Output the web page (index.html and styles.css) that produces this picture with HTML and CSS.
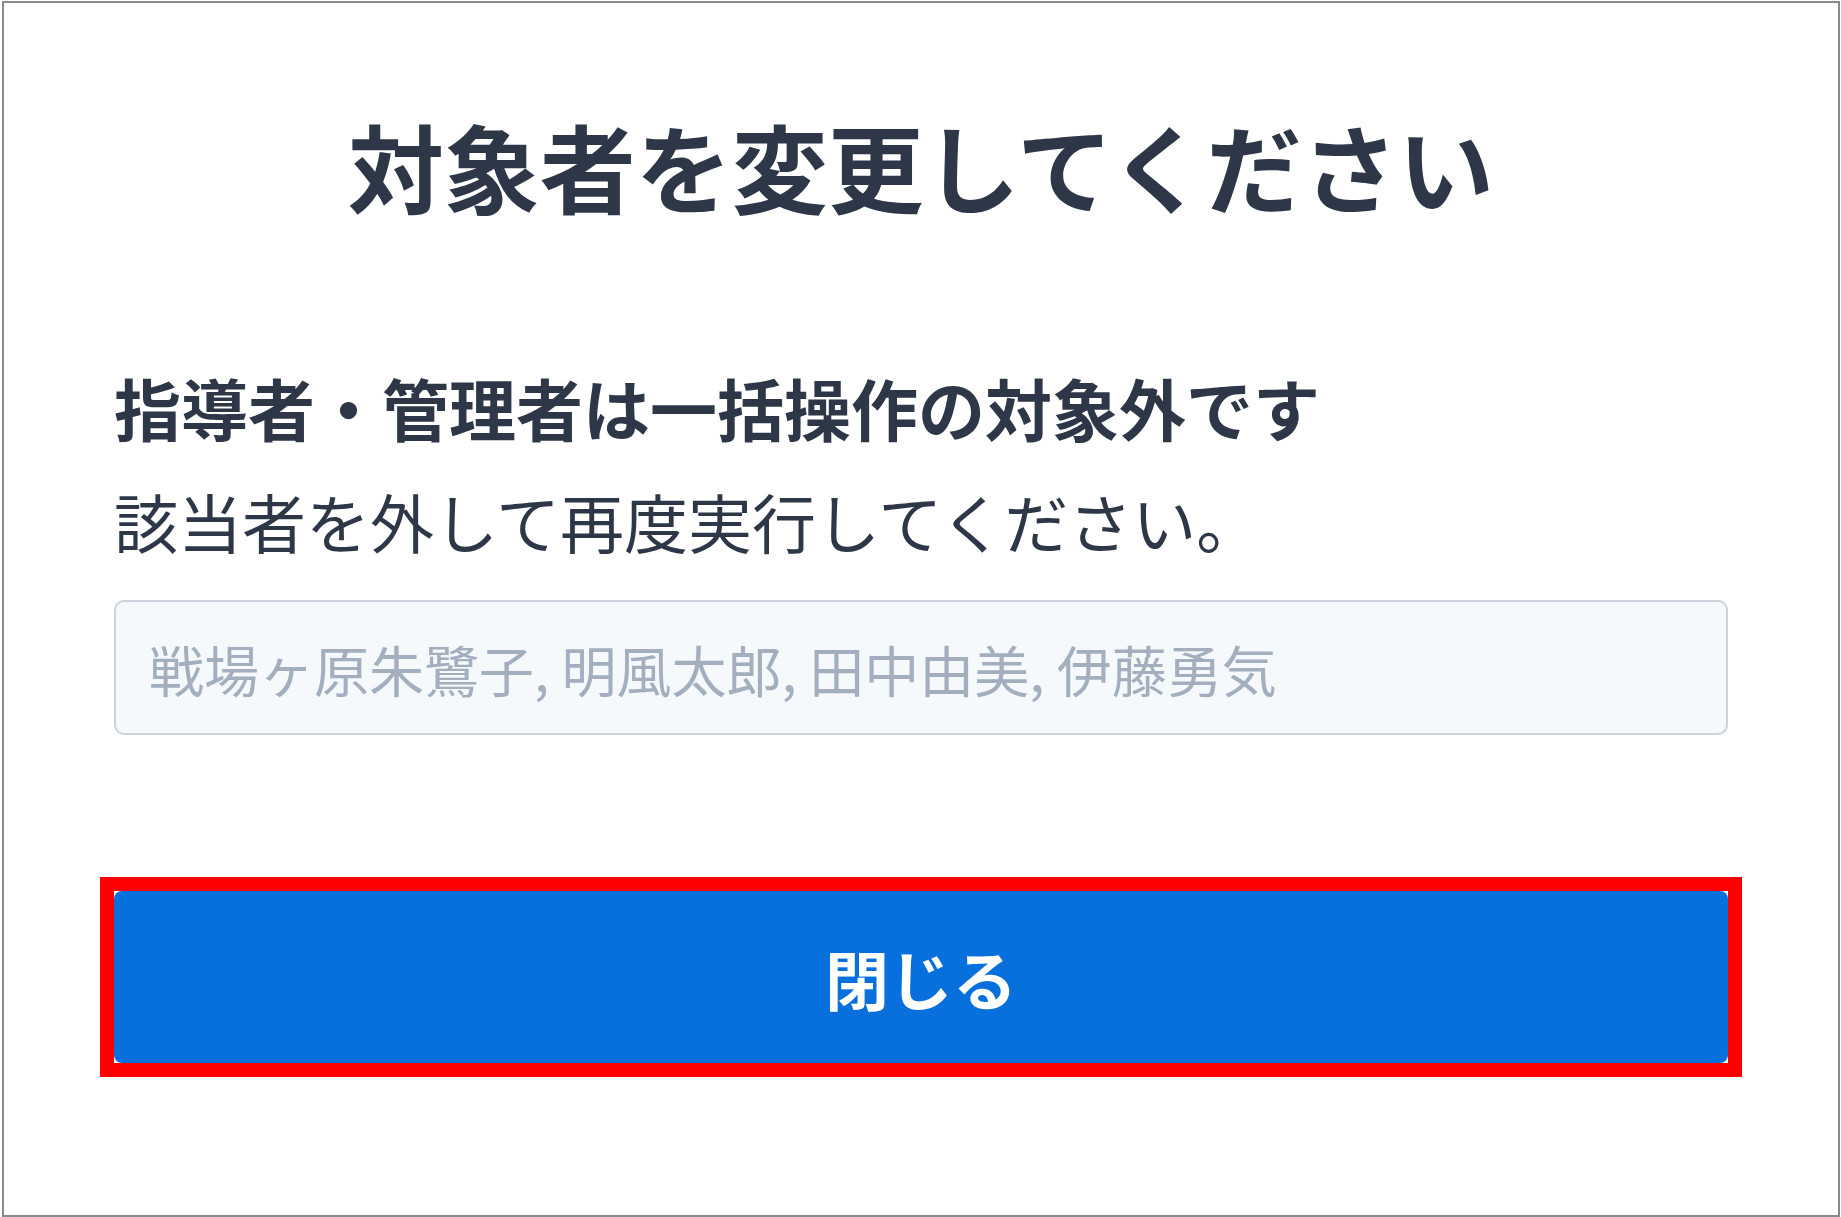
FILE: index.html
```html
<!DOCTYPE html>
<html lang="ja">
<head>
<meta charset="utf-8">
<title>対象者を変更してください</title>
<link rel="stylesheet" href="styles.css">
</head>
<body>
<div class="frame">
  <h1 class="title">対象者を変更してください</h1>
  <p class="lead">指導者・管理者は一括操作の対象外です</p>
  <p class="desc">該当者を外して再度実行してください。</p>
  <input class="names" type="text" placeholder="戦場ヶ原朱鷺子, 明風太郎, 田中由美, 伊藤勇気">
  <div class="highlight">
    <button class="close" type="button">閉じる</button>
  </div>
</div>
</body>
</html>
```
FILE: styles.css
```css
html, body {
  margin: 0;
  padding: 0;
  background: #ffffff;
}

body {
  font-family: "Noto Sans CJK JP", "Noto Sans", sans-serif;
  color: #2d3748;
}

.frame {
  box-sizing: border-box;
  width: 1838px;
  height: 1216px;
  margin: 1px 0 0 2px;
  border: 2px solid #8a8a8a;
  padding: 90px 110px 0 110px;
  display: flex;
  flex-direction: column;
}

.title {
  margin: 0;
  font-size: 96px;
  line-height: 144px;
  font-weight: 700;
  text-align: center;
  color: #2d3748;
}

.lead {
  margin: 120px 0 0 0;
  font-size: 67px;
  line-height: 100px;
  font-weight: 700;
  color: #2d3748;
}

.desc {
  margin: 15px 0 0 0;
  font-size: 64px;
  line-height: 96px;
  font-weight: 400;
  color: #2d3748;
}

.names {
  box-sizing: border-box;
  margin: 32px 0 0 0;
  width: 100%;
  height: 135px;
  padding: 0 0 0 33px;
  border: 2px solid #cbd3de;
  border-radius: 10px;
  background: #f6f9fc;
  font-family: "Noto Sans CJK JP", "Noto Sans", sans-serif;
  font-size: 55px;
  color: #2d3748;
  outline: none;
}

.names::placeholder {
  color: #a3afbf;
  opacity: 1;
}

.highlight {
  margin: 142px -14px 0 -14px;
  border: 14px solid #ff0000;
  display: flex;
}

.close {
  flex: 1;
  height: 172px;
  border: none;
  border-radius: 8px;
  background: #0770dc;
  color: #ffffff;
  font-family: "Noto Sans CJK JP", "Noto Sans", sans-serif;
  font-size: 64px;
  font-weight: 700;
  padding: 0;
  cursor: pointer;
}
```
